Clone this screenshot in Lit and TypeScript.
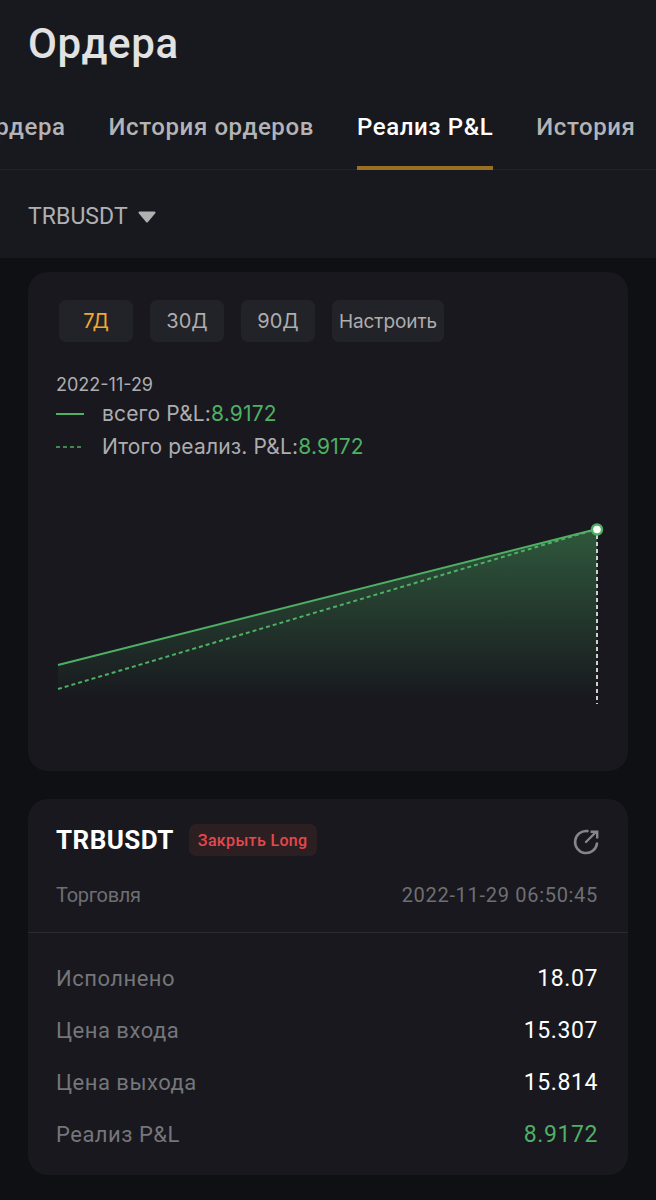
import { LitElement, html, css, svg } from "lit";
import { customElement } from "lit/decorators.js";

@customElement("app-root")
export class AppRoot extends LitElement {
  static styles = css`
    :host { display: block; width: 656px; height: 1200px; overflow: hidden; background: #0f1014; font-family: "Roboto", "Noto Sans", sans-serif; }
    * { box-sizing: border-box; }
    .head { height: 258px; background: #18191e; overflow: hidden; }
    .title { height: 88px; padding: 19px 0 0 28px; font-size: 42px; line-height: 50px; font-weight: 500; color: #e2e2e2; letter-spacing: 0.65px; }
    .tabs { height: 82px; display: flex; gap: 43px; margin-left: -22px; border-bottom: 1px solid #232429; white-space: nowrap; width: 678px; }
    .tab { position: relative; padding-top: 24px; font-size: 24px; line-height: 30px; font-weight: 500; color: #b4b4b6; letter-spacing: 0.6px; height: 81px; }
    .tab.on { color: #fff; }
    .tab.on::after { content: ""; position: absolute; left: 0; right: 0; bottom: -1px; height: 4px; background: #9a6f22; }
    .pair { display: flex; align-items: center; gap: 10px; padding: 32px 0 0 28px; font-size: 23px; line-height: 30px; color: #b0b0b2; letter-spacing: 0.05px; }
    .body { padding: 14px 28px 0; display: flex; flex-direction: column; gap: 28px; }
    .card { background: #18181e; border-radius: 20px; }
    .chart { height: 499px; padding: 28px 0 0 28px; position: relative; font-family: "Inter", "Roboto", sans-serif; }
    .btns { display: flex; gap: 17px; margin-left: 3px; }
    .btn { width: 74px; height: 42px; display: flex; align-items: center; justify-content: center; background: #222328; border-radius: 7px; font-size: 20px; color: #adadaf; }
    .btn.on { color: #f0a92e; }
    .btn.wide { width: 112px; font-size: 19px; letter-spacing: -0.1px; }
    .legend { margin-top: 31px; color: #adadaf; }
    .date { font-size: 18px; line-height: 24px; }
    .row { display: flex; align-items: center; font-size: 21px; line-height: 33px; height: 33px; letter-spacing: 0.15px; }
    .swatch { width: 46px; display: flex; flex: none; }
    .green { color: #4eb064; }
    .plot { position: absolute; left: 0; top: 0; }
    .detail { height: 376px; }
    .top { height: 134px; padding: 0 30px 0 28px; border-bottom: 1px solid #2a2b30; }
    .l1 { display: flex; align-items: center; height: 82px; }
    .sym { font-size: 26px; font-weight: 700; color: #fff; letter-spacing: 0.45px; }
    .tag { margin-left: 15px; height: 32px; padding: 0 9px; display: flex; align-items: center; border-radius: 7px; background: #2c1f22; color: #e5484d; font-size: 16px; font-weight: 500; letter-spacing: 0.35px; }
    .ext { margin: 2px -2px 0 auto; display: flex; }
    .l2 { display: flex; justify-content: space-between; font-size: 20px; line-height: 28px; color: #6e6f74; letter-spacing: -0.3px; }
    .l2 .time { letter-spacing: 0.7px; }
    .rows { padding: 19px 30px 0 28px; }
    .kv { display: flex; justify-content: space-between; align-items: center; height: 52px; font-size: 22px; color: #75767a; letter-spacing: 0.5px; }
    .kv b { font-weight: 400; color: #fff; font-size: 23px; letter-spacing: 0.6px; }
    .kv b.green { color: #4eb064; }
  `;

  private plot() {
    return html`<svg class="plot" width="600" height="499" viewBox="28 272 600 499">
      <defs>
        <linearGradient id="g" x1="0" y1="529" x2="0" y2="700" gradientUnits="userSpaceOnUse">
          <stop offset="0" stop-color="#4eb064" stop-opacity="0.42" />
          <stop offset="1" stop-color="#4eb064" stop-opacity="0" />
        </linearGradient>
      </defs>
      ${svg`<path d="M58 665 L597 529 V700 H58 Z" fill="url(#g)" />
      <path d="M58 689 L597 529" fill="none" stroke="#4eb064" stroke-width="2" stroke-dasharray="4 3" />
      <path d="M58 665 L597 529" fill="none" stroke="#4eb064" stroke-width="2" />
      <path d="M597 535 V704" fill="none" stroke="#cfcfcf" stroke-width="2" stroke-dasharray="4 3" />
      <circle cx="597" cy="529.5" r="5" fill="#fff" stroke="#4eb064" stroke-width="2.4" />`}
    </svg>`;
  }

  render() {
    return html`
      <div class="head">
        <div class="title">Ордера</div>
        <div class="tabs">
          <div class="tab">Ордера</div>
          <div class="tab">История ордеров</div>
          <div class="tab on">Реализ P&amp;L</div>
          <div class="tab">История</div>
        </div>
        <div class="pair">
          TRBUSDT
          <svg width="18" height="12" viewBox="0 0 18 12"><path d="M1.5 1.5 H16.5 L9 10.5 Z" fill="#b0b0b2" stroke="#b0b0b2" stroke-width="2" stroke-linejoin="round" /></svg>
        </div>
      </div>
      <div class="body">
        <div class="card chart">
          ${this.plot()}
          <div class="btns">
            <div class="btn on">7Д</div>
            <div class="btn">30Д</div>
            <div class="btn">90Д</div>
            <div class="btn wide">Настроить</div>
          </div>
          <div class="legend">
            <div class="date">2022-11-29</div>
            <div class="row">
              <span class="swatch"><svg width="28" height="2"><path d="M0 1 H28" stroke="#4eb064" stroke-width="2" /></svg></span>
              всего P&amp;L:<span class="green">8.9172</span>
            </div>
            <div class="row">
              <span class="swatch"><svg width="26" height="2"><path d="M0 1 H26" stroke="#4eb064" stroke-width="1.5" stroke-dasharray="4 3" /></svg></span>
              Итого реализ. P&amp;L:<span class="green">8.9172</span>
            </div>
          </div>
        </div>
        <div class="card detail">
          <div class="top">
            <div class="l1">
              <span class="sym">TRBUSDT</span>
              <span class="tag">Закрыть Long</span>
              <span class="ext">
                <svg width="30" height="30" viewBox="-2 -2 30 30" fill="none" stroke="#85868a" stroke-width="2.6" stroke-linecap="round">
                  <path d="M15.5 3.1 A11 11 0 1 0 25 15.5" />
                  <path d="M14 14 L23.5 4.5" stroke-width="2.4" />
                  <path d="M18.6 3.8 H25.2 V10.4" stroke-width="2.4" stroke-linecap="butt" />
                </svg>
              </span>
            </div>
            <div class="l2"><span>Торговля</span><span class="time">2022-11-29 06:50:45</span></div>
          </div>
          <div class="rows">
            <div class="kv"><span>Исполнено</span><b>18.07</b></div>
            <div class="kv"><span>Цена входа</span><b>15.307</b></div>
            <div class="kv"><span>Цена выхода</span><b>15.814</b></div>
            <div class="kv"><span>Реализ P&amp;L</span><b class="green">8.9172</b></div>
          </div>
        </div>
      </div>
    `;
  }
}
